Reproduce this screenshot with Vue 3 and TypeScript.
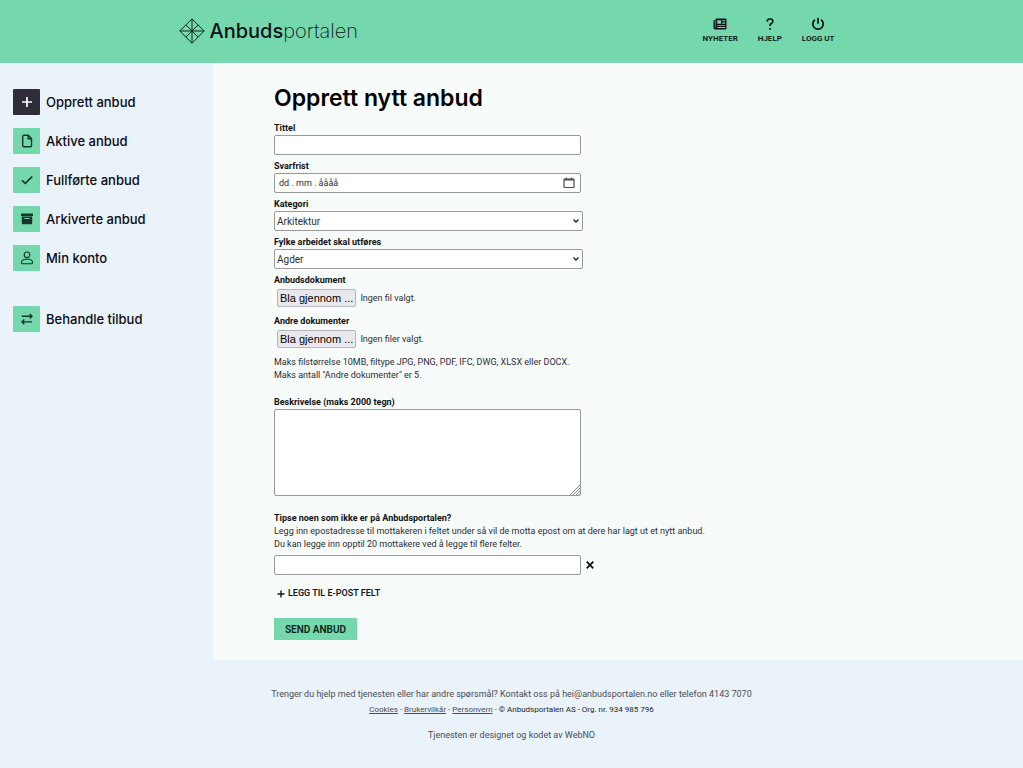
<script setup lang="ts">
import { ref } from 'vue'

interface MenuItem {
  label: string
  icon: 'plus' | 'file' | 'check' | 'archive' | 'user' | 'swap'
  active?: boolean
  separated?: boolean
}

const menu: MenuItem[] = [
  { label: 'Opprett anbud', icon: 'plus', active: true },
  { label: 'Aktive anbud', icon: 'file' },
  { label: 'Fullførte anbud', icon: 'check' },
  { label: 'Arkiverte anbud', icon: 'archive' },
  { label: 'Min konto', icon: 'user' },
  { label: 'Behandle tilbud', icon: 'swap', separated: true },
]

const title = ref('')
const deadline = ref('')
const category = ref('Arkitektur')
const county = ref('Agder')
const description = ref('')
const emails = ref<string[]>([''])
const mainFile = ref<HTMLInputElement | null>(null)
const otherFiles = ref<HTMLInputElement | null>(null)

function addEmail() {
  if (emails.value.length < 20) emails.value.push('')
}
function removeEmail(index: number) {
  emails.value.splice(index, 1)
}
</script>

<template>
  <div class="page">
    <header class="top">
      <div class="top-inner">
        <a class="logo" href="#">
          <svg class="mark" viewBox="0 0 26 26" aria-hidden="true">
            <path d="M13 .8 25.2 13 13 25.2.8 13ZM13 .8V25.2M.8 13H25.2M6.9 6.9 19.1 19.1M19.1 6.9 6.9 19.1" />
          </svg>
          <span class="name"><b>Anbuds</b>portalen</span>
        </a>
        <nav class="top-nav">
          <a href="#">
            <svg viewBox="0 0 14 14" aria-hidden="true">
              <path fill-rule="evenodd" d="M3.6 1.5H12.200Q13.500 1.500 13.500 2.800V11.200Q13.500 12.500 12.200 12.500H2.300Q.5 12.500 .5 10.700V3.800Q.5 3 1.200 3 1.900 3 1.900 3.800V10.700H2.500V2.600Q2.500 1.500 3.600 1.500ZM4.200 3.200V6.700H8V3.200ZM9.200 3.200V4.300H12.200V3.200ZM9.200 5.600V6.700H12.200V5.600ZM4.200 7.900V8.800H12.200V7.900ZM4.200 10V10.900H12.200V10Z" />
            </svg>
            <span>NYHETER</span>
          </a>
          <a href="#">
            <svg class="line" viewBox="0 0 14 14" aria-hidden="true">
              <path d="M4.300 4.700V4.200Q4.300 2 6.500 2H7.500Q9.800 2 9.800 4.200 9.800 5.500 8.600 6.200 7 7 7 8.400V9M7 11V12.700" />
            </svg>
            <span>HJELP</span>
          </a>
          <a href="#">
            <svg class="line" viewBox="0 0 14 14" aria-hidden="true">
              <path d="M7 .8V6.800M3.900 2.800A5.200 5.200 0 1 0 10.100 2.800" />
            </svg>
            <span>LOGG UT</span>
          </a>
        </nav>
      </div>
    </header>

    <div class="body">
      <aside class="side">
        <nav>
          <a
            v-for="item in menu"
            :key="item.label"
            href="#"
            class="menu-item"
            :class="{ active: item.active, separated: item.separated }"
          >
            <span class="tile">
              <svg viewBox="0 0 14 14" aria-hidden="true">
                <path v-if="item.icon === 'plus'" class="thick" d="M7 2V12M2 7H12" />
                <path v-else-if="item.icon === 'file'" d="M4 1.300H8.300L11.500 4.500V11.400Q11.500 12.700 10.200 12.700H4Q2.700 12.700 2.700 11.400V2.600Q2.700 1.300 4 1.300ZM8.100 1.500V4.800H11.300" />
                <path v-else-if="item.icon === 'check'" class="thick" d="M2 7.300 5.300 10.400 12.200 3.700" />
                <g v-else-if="item.icon === 'archive'" class="solid">
                  <path d="M1.400 1.500H12.600Q13 1.500 13 1.900V4H1V1.900Q1 1.500 1.400 1.500Z" />
                  <path fill-rule="evenodd" d="M1.800 4.600H12.200V10.900Q12.200 12.200 10.900 12.200H3.100Q1.800 12.200 1.800 10.900ZM4.500 6V7H9.500V6Z" />
                </g>
                <path v-else-if="item.icon === 'user'" class="thin" d="M7 1A2.800 2.800 0 1 1 7 6.600 2.800 2.800 0 1 1 7 1ZM5 8.300H9Q12.500 8.700 12.500 11.700 12.500 12.700 11.500 12.700H2.500Q1.500 12.700 1.500 11.700 1.500 8.700 5 8.300Z" />
                <path v-else d="M1.800 4.300H12M9.700 2 12 4.300 9.700 6.600M12.200 9.900H2M4.300 7.600 2 9.900 4.300 12.200" />
              </svg>
            </span>
            <span>{{ item.label }}</span>
          </a>
        </nav>
      </aside>

      <main class="content">
        <h1>Opprett nytt anbud</h1>
        <form @submit.prevent>
          <div class="field">
            <label for="title">Tittel</label>
            <input id="title" v-model="title" class="box" type="text" />
          </div>
          <div class="field">
            <label for="deadline">Svarfrist</label>
            <div class="box date">
              <input id="deadline" v-model="deadline" type="text" placeholder="dd . mm . åååå" />
              <button type="button" aria-label="Velg dato">
                <svg viewBox="0 0 12 12" aria-hidden="true">
                  <path d="M1.500 2H10.500Q11 2 11 2.500V10Q11 10.500 10.500 10.500H1.500Q1 10.500 1 10V2.500Q1 2 1.500 2ZM3.500 .5V2M8.500 .5V2M1 3H11" />
                </svg>
              </button>
            </div>
          </div>
          <div class="field">
            <label for="category">Kategori</label>
            <div class="select">
              <select id="category" v-model="category" class="box">
                <option>Arkitektur</option>
              </select>
              <svg viewBox="0 0 8 8" aria-hidden="true"><path d="M1.500 2.500 4 5 6.500 2.500" /></svg>
            </div>
          </div>
          <div class="field">
            <label for="county">Fylke arbeidet skal utføres</label>
            <div class="select">
              <select id="county" v-model="county" class="box">
                <option>Agder</option>
              </select>
              <svg viewBox="0 0 8 8" aria-hidden="true"><path d="M1.500 2.500 4 5 6.500 2.500" /></svg>
            </div>
          </div>
          <div class="field upload">
            <label for="main-file">Anbudsdokument</label>
            <div class="file">
              <input id="main-file" ref="mainFile" type="file" hidden />
              <button type="button" @click="mainFile?.click()">Bla gjennom ...</button>
              <span>Ingen fil valgt.</span>
            </div>
          </div>
          <div class="field upload">
            <label for="other-files">Andre dokumenter</label>
            <div class="file">
              <input id="other-files" ref="otherFiles" type="file" multiple hidden />
              <button type="button" @click="otherFiles?.click()">Bla gjennom ...</button>
              <span>Ingen filer valgt.</span>
            </div>
          </div>
          <p class="hint">
            Maks filstørrelse 10MB, filtype JPG, PNG, PDF, IFC, DWG, XLSX eller DOCX.<br />
            Maks antall "Andre dokumenter" er 5.
          </p>
          <div class="field description">
            <label for="description">Beskrivelse (maks 2000 tegn)</label>
            <div class="area">
              <textarea id="description" v-model="description" class="box"></textarea>
              <svg viewBox="0 0 10 10" aria-hidden="true"><path d="M0 10 10 0M3 10 10 3M6 10 10 6M8.500 10 10 8.500" /></svg>
            </div>
          </div>
          <div class="tips">
            <label for="email-0">Tipse noen som ikke er på Anbudsportalen?</label>
            <p>
              Legg inn epostadresse til mottakeren i feltet under så vil de motta epost om at dere har lagt ut et nytt anbud.<br />
              Du kan legge inn opptil 20 mottakere ved å legge til flere felter.
            </p>
            <div v-for="(_, index) in emails" :key="index" class="email">
              <input :id="`email-${index}`" v-model="emails[index]" class="box" type="email" />
              <button type="button" aria-label="Fjern" @click="removeEmail(index)">
                <svg viewBox="0 0 8 8" aria-hidden="true"><path d="M.7 .7 7.300 7.300M7.300 .7 .7 7.300" /></svg>
              </button>
            </div>
          </div>
          <button class="add" type="button" @click="addEmail">
            <svg viewBox="0 0 8 8" aria-hidden="true"><path d="M4 .5V7.500M.5 4H7.500" /></svg>
            <span>LEGG TIL E-POST FELT</span>
          </button>
          <button class="send" type="submit">SEND ANBUD</button>
        </form>
      </main>
    </div>

    <footer class="foot">
      <p>Trenger du hjelp med tjenesten eller har andre spørsmål? Kontakt oss på hei@anbudsportalen.no eller telefon 4143 7070</p>
      <p class="legal">
        <a href="#">Cookies</a> - <a href="#">Brukervilkår</a> - <a href="#">Personvern</a> - <span>© Anbudsportalen AS - Org. nr. 934 985 796</span>
      </p>
      <p class="credit">Tjenesten er designet og kodet av WebNO</p>
    </footer>
  </div>
</template>

<style>
body {
  margin: 0;
  background: #eaf2fa;
}
</style>

<style scoped>
.page {
  --green: #75d8ac;
  --wide: Inter, "Open Sans", sans-serif;
  --narrow: Roboto, "Liberation Sans", sans-serif;
  min-height: 100vh;
  font: 9px/13px var(--narrow);
  color: #2b2d33;
}
* {
  box-sizing: border-box;
}
a {
  color: inherit;
  text-decoration: none;
}
p {
  margin: 0;
}
button,
input,
select,
textarea {
  font: inherit;
  font-size: 10px;
  color: inherit;
}
svg {
  display: block;
  flex: none;
}
.top {
  background: var(--green);
  color: #0b1116;
}
.top-inner {
  display: flex;
  align-items: center;
  justify-content: space-between;
  max-width: 666px;
  height: 63px;
  margin: 0 auto;
  padding: 0 10px 2px 0;
}
.logo {
  display: flex;
  align-items: center;
  gap: 5px;
}
.mark {
  width: 26px;
  height: 26px;
  fill: none;
  stroke: #10261e;
}
.name {
  font: 200 20px/28px var(--wide);
}
.name b {
  font-weight: 500;
}
.top-nav {
  display: flex;
  gap: 20px;
}
.top-nav a {
  display: flex;
  flex-direction: column;
  align-items: center;
  gap: 2px;
  font-size: 8px;
  line-height: 12px;
  font-weight: 600;
}
.top-nav svg {
  width: 14px;
  height: 14px;
  fill: currentColor;
}
.top-nav .line {
  fill: none;
  stroke: currentColor;
  stroke-width: 1.7;
}
.body {
  display: grid;
  grid-template-columns: 213px minmax(0, 1fr);
}
.side {
  padding: 26px 13px;
}
.menu-item {
  display: flex;
  align-items: center;
  gap: 6px;
  margin-bottom: 13px;
  font: 500 13px/18px var(--wide);
  color: #0a0b12;
}
.separated {
  margin-top: 35px;
}
.tile {
  display: grid;
  place-items: center;
  width: 27px;
  height: 26px;
  border-radius: 1px;
  background: var(--green);
  color: #17352b;
}
.active .tile {
  background: #2e2d39;
  color: #fff;
}
.tile svg {
  width: 14px;
  height: 14px;
  fill: none;
  stroke: currentColor;
  stroke-width: 1.4;
}
.tile .thick {
  stroke-width: 1.7;
}
.tile .thin {
  stroke-width: 1.1;
}
.tile .solid {
  fill: currentColor;
  stroke: none;
}
.content {
  padding: 20px 61px;
  background: #f7fcfa;
}
h1 {
  margin: 0 0 9px;
  font: 600 23px/30px var(--wide);
  color: #000;
}
.field {
  margin-bottom: 5px;
}
.upload {
  margin-bottom: 6px;
}
label {
  display: block;
  width: fit-content;
  font-weight: 700;
  color: #111;
}
.box {
  display: block;
  width: 100%;
  max-width: 307px;
  height: 20px;
  padding: 0 4px;
  border: 1px solid #999;
  border-radius: 2px;
  background: #fff;
}
.date {
  display: flex;
  align-items: center;
  justify-content: space-between;
  padding-right: 5px;
}
.date input {
  width: 120px;
  padding: 0;
  border: 0;
  background: none;
  font-size: 9px;
}
.date input::placeholder {
  color: #2b2d33;
  opacity: 1;
}
.date button,
.email button {
  padding: 0;
  border: 0;
  background: none;
}
.date svg {
  width: 12px;
  height: 12px;
  fill: none;
  stroke: #4b4b50;
  stroke-width: 1.2;
}
.select {
  position: relative;
  max-width: 309px;
}
.select .box {
  max-width: none;
  padding: 0 2px;
  appearance: none;
}
.select svg {
  position: absolute;
  top: 6px;
  right: 3px;
  width: 8px;
  height: 8px;
  fill: none;
  stroke: #222;
  stroke-width: 1.4;
  pointer-events: none;
}
.file {
  display: flex;
  align-items: center;
  gap: 4px;
  height: 22px;
  padding: 1px 3px;
}
.file button {
  height: 18px;
  padding: 0 2px;
  border: 1px solid #b5b5c3;
  border-radius: 2px;
  background: #e9e9ed;
  font: 11px/14px "Liberation Sans", sans-serif;
  color: #000;
}
.hint {
  margin: 6px 0 14px;
}
.area {
  position: relative;
  max-width: 307px;
}
.area .box {
  height: 87px;
  resize: none;
}
.area svg {
  position: absolute;
  right: 1px;
  bottom: 1px;
  width: 10px;
  height: 10px;
  stroke: #888;
  pointer-events: none;
}
.description {
  margin-bottom: 16px;
}
.email {
  display: flex;
  align-items: center;
  gap: 5px;
  margin-top: 4px;
}
.email svg {
  width: 8px;
  height: 8px;
  stroke: #0b0c12;
  stroke-width: 1.7;
}
.add {
  display: flex;
  align-items: center;
  gap: 3px;
  margin-top: 12px;
  padding: 0 3px;
  border: 0;
  background: none;
  font-size: 9px;
  font-weight: 600;
  color: #16171d;
}
.add svg {
  width: 8px;
  height: 8px;
  stroke: currentColor;
  stroke-width: 1.4;
}
.send {
  display: block;
  height: 22px;
  margin-top: 18px;
  padding: 0 11px;
  border: 0;
  background: var(--green);
  font-weight: 600;
  color: #0b1f18;
}
.foot {
  padding: 26px 20px;
  text-align: center;
  line-height: 16px;
  color: #4a4d55;
}
.legal {
  font-size: 8px;
}
.legal a {
  text-decoration: underline;
}
.legal span {
  color: #23252b;
}
.credit {
  margin-top: 9px;
}
</style>
